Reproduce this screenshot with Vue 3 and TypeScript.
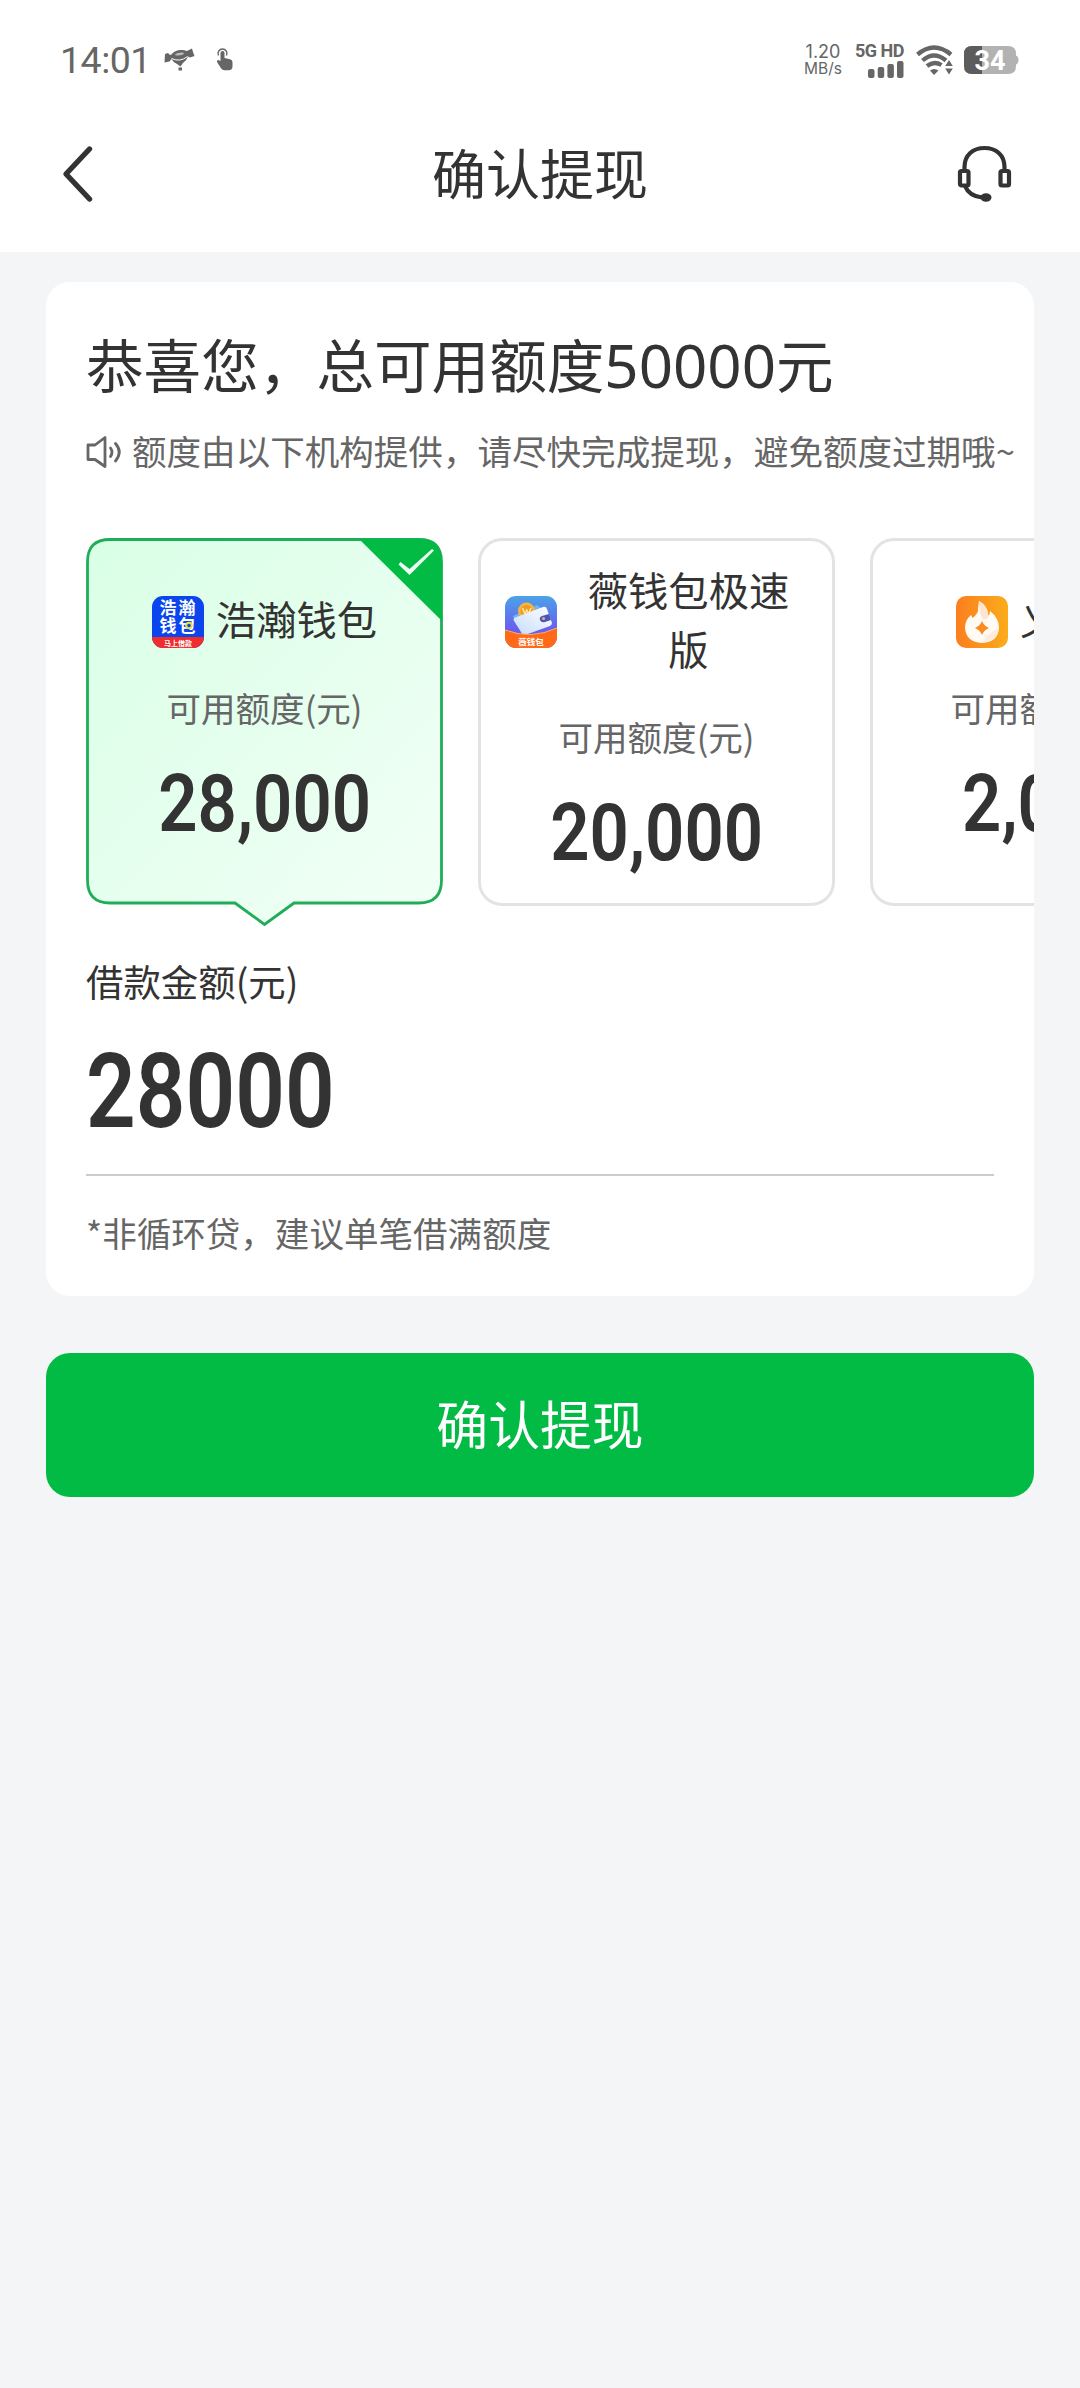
<script setup lang="ts">
interface Provider {
  id: string
  name: string
  amount: string
  selected: boolean
}

const providers: Provider[] = [
  { id: 'haohan', name: '浩瀚钱包', amount: '28,000', selected: true },
  { id: 'wei', name: '薇钱包极速版', amount: '20,000', selected: false },
  { id: 'fire', name: '义钱包', amount: '2,000', selected: false },
]
</script>

<template>
  <div class="page">
    <div class="status">
      <span class="clock">14:01</span>
      <svg class="candy" width="32" height="24" viewBox="0 0 32 24">
        <path d="M1 6L4 5L6 7L7.500 6.500Q10 2.500 16 2Q20 1.500 22.500 3L24 2.500L28 0.500L29 4L30.500 8L26 9.500L24 8.500Q23 12 19 15L16.500 18.500L13 16Q9 14 7.500 11L5.500 13.500L0.500 14.500Z" fill="#666" />
        <path d="M7.500 10.500Q16 14.500 23.500 8.500" stroke="#fff" stroke-width="1" fill="none" />
        <ellipse cx="15.500" cy="6" rx="4.500" ry="1.300" transform="rotate(-10 15.500 6)" fill="#bbb" />
        <path d="M14.500 19.500h3.500v3h-3.500z" fill="#666" />
      </svg>
      <svg class="touch" width="18" height="24" viewBox="0 0 18 24">
        <path d="M2.500 7.500a4.500 4.500 0 1 1 8 0" stroke="#666" stroke-width="1.400" fill="none" />
        <path d="M4.500 5a2 2 0 0 1 4 0v5l5.500 1.200q2.500 .5 2.500 3v4q0 4-4 4H8.500q-2 0-3.500-2L1 14q-.5-2 1.500-2L4.500 13z" fill="#666" />
      </svg>
      <div class="status-right">
        <div class="speed"><span class="rate">1.20</span><span class="unit">MB/s</span></div>
        <div class="signal">
          <span class="net">5G HD</span>
          <svg width="36" height="17" viewBox="0 0 36 17">
            <rect x="0" y="8" width="6.500" height="9" rx="2" fill="#666" />
            <rect x="9.700" y="6" width="6.500" height="11" rx="2" fill="#666" />
            <rect x="19.400" y="3" width="6.500" height="14" rx="2" fill="#666" />
            <rect x="29" y="0" width="6.500" height="17" rx="2" fill="#666" />
          </svg>
        </div>
        <svg class="wifi" width="38" height="30" viewBox="0 0 38 30">
          <g fill="none" stroke="#666" stroke-width="4.300">
            <path d="M1.500 9.500Q18 -4.500 35 9.500" />
            <path d="M6.500 15.500Q18 5.500 30 15.500" />
            <path d="M11 21Q18 15.500 25.500 20" />
          </g>
          <path d="M14 25.500q4-3 8.500 0L18 30z" fill="#666" />
          <path d="M33 15l3.800 6h-7.600zM33 29.500l3.800-6h-7.600z" fill="#666" />
        </svg>
        <svg class="battery" width="55" height="28" viewBox="0 0 55 28">
          <path d="M8 0H44q8 0 8 8v1.500q2.500 1 2.500 4.500T52 18.500V20q0 8-8 8H8q-8 0-8-8V8q0-8 8-8z" fill="#b2b2b2" />
          <path d="M8 0H18V28H8q-8 0-8-8V8q0-8 8-8z" fill="#5c5c5c" />
          <text x="26" y="23.500" text-anchor="middle" class="level">34</text>
        </svg>
      </div>
    </div>

    <header class="nav">
      <svg width="34" height="60" viewBox="0 0 34 60">
        <path d="M28.500 5L5 30L28.500 55" fill="none" stroke="#333" stroke-width="5.400" stroke-linecap="round" stroke-linejoin="round" />
      </svg>
      <h1>确认提现</h1>
      <svg width="56" height="58" viewBox="0 0 56 58">
        <g fill="none" stroke="#333" stroke-width="4.200">
          <path d="M7.500 25V22C7.500 10 16 3 27.500 3S47.500 10 47.500 22V25" />
          <rect x="3" y="26" width="8.500" height="14.500" rx="1.500" />
          <rect x="43.500" y="26" width="8.500" height="14.500" rx="1.500" />
          <path d="M8 41Q12 51 25 52.500" />
        </g>
        <ellipse cx="29" cy="52.500" rx="5.500" ry="4.200" fill="#333" />
      </svg>
    </header>

    <main>
      <section class="card">
        <h2>恭喜您，总可用额度<span class="digits">50000</span>元</h2>
        <p class="tip">
          <svg width="36" height="34" viewBox="0 0 36 34">
            <g fill="none" stroke="#666" stroke-width="2.800" stroke-linecap="round" stroke-linejoin="round">
              <path d="M2 10H9L19 2.500V31.500L9 24.500H2Z" />
              <path d="M24.500 13Q27.500 17 24.500 21.500" />
              <path d="M29.500 8.500Q37 17 29.500 26" />
            </g>
          </svg>
          <span class="tip-text">额度由以下机构提供，请尽快完成提现，避免额度过期哦~</span>
        </p>

        <div class="providers">
          <div v-for="p in providers" :key="p.id" class="provider" :class="{ selected: p.selected }">
            <svg v-if="p.selected" class="bubble" width="357" height="390" viewBox="0 0 357 390">
              <defs>
                <linearGradient id="mint" x1="0" y1="0" x2="1" y2="1">
                  <stop offset="0" stop-color="#d9ffe6" />
                  <stop offset="1" stop-color="#f2fff6" />
                </linearGradient>
              </defs>
              <path d="M24 1.500H333Q355.500 1.500 355.500 24V342Q355.500 365 333 365H208L178.500 386.500L149 365H24Q1.500 365 1.500 342V24Q1.500 1.500 24 1.500Z" fill="url(#mint)" stroke="#20ad59" stroke-width="2.800" />
              <path d="M273 1H333Q356 1 356 24V83Z" fill="#02bb44" />
              <path d="M312.500 26.500L314.500 24L323.500 31L346 11L348 12.500L323.500 37Z" fill="#edfff3" />
            </svg>
            <div class="who">
              <svg v-if="p.id === 'haohan'" class="logo" viewBox="0 0 52 52">
                <defs><clipPath id="haohan-tile"><rect width="52" height="52" rx="11" /></clipPath></defs>
                <g clip-path="url(#haohan-tile)">
                  <rect width="52" height="52" fill="#0b45ee" />
                  <rect y="41" width="52" height="11" fill="#f02c2c" />
                </g>
                <g class="logo-text">
                  <text x="26.500" y="18" font-size="17" letter-spacing="2">浩瀚</text>
                  <text x="26.500" y="36" font-size="17" letter-spacing="2">钱包</text>
                  <text x="26" y="49.500" font-size="7">马上借款</text>
                </g>
                <circle cx="37" cy="29.500" r="2.800" fill="#0b45ee" stroke="#e8e04a" stroke-width="2" />
              </svg>
              <svg v-else-if="p.id === 'wei'" class="logo" viewBox="0 0 52 52">
                <defs>
                  <clipPath id="wei-tile"><rect width="52" height="52" rx="11" /></clipPath>
                  <linearGradient id="wei-sky" x1="0" y1="0" x2="0" y2="1">
                    <stop offset="0" stop-color="#4aa3e6" />
                    <stop offset=".65" stop-color="#6b5cf0" />
                  </linearGradient>
                  <linearGradient id="wei-purse" x1="0" y1="1" x2="1" y2="0">
                    <stop offset="0" stop-color="#c4dcfb" />
                    <stop offset="1" stop-color="#fff" />
                  </linearGradient>
                </defs>
                <g clip-path="url(#wei-tile)">
                  <rect width="52" height="52" fill="url(#wei-sky)" />
                  <path d="M8 20L32 9L37 13L40 24L12 30Z" fill="#6db6f3" />
                  <circle cx="21.500" cy="15" r="8.500" fill="#f6b443" />
                  <circle cx="21.500" cy="15" r="6" fill="#f09a25" />
                  <path d="M17.500 12l2.500 6 1.800-4 2 4 2-6" fill="none" stroke="#ffe79a" stroke-width="1.600" />
                  <path d="M9 22L38 11q3-1 4 2l5 14q0 2-2 3L20 39q-3 0-4-3L8.500 24z" fill="url(#wei-purse)" />
                  <path d="M44 18l-7 2q-3 1-2 4t5 2l6-2z" fill="#4b56b8" />
                  <circle cx="38.500" cy="22.500" r="1.600" fill="#e8a678" />
                  <path d="M0 34Q26 44 52 32V52H0z" fill="#ff6a19" />
                  <path d="M0 34Q26 44 52 32" fill="none" stroke="#ffae5c" stroke-width="1" />
                </g>
                <g class="logo-text"><text x="26" y="48.500" font-size="8.500">薇钱包</text></g>
              </svg>
              <svg v-else class="logo" viewBox="0 0 52 52">
                <defs>
                  <linearGradient id="fire-bg" x1="0" y1="0" x2="1" y2="0">
                    <stop offset="0" stop-color="#fb7f1e" />
                    <stop offset="1" stop-color="#fbac1c" />
                  </linearGradient>
                </defs>
                <rect width="52" height="52" rx="10" fill="url(#fire-bg)" />
                <path d="M23 5Q32 10 32.500 20Q34 18 34 15Q43 22 43 32Q42 46 26 47Q10 46 9 32Q9 24 15 19Q16 20 16.500 22Q23 17 22 12Z" fill="#fffaf4" />
                <path d="M23 5Q32 10 32.500 20Q31 24 27 23Q23 18 23 5Z" fill="#ffe4d0" />
                <path d="M43 32Q41 45 27 46Q32 37 43 32Z" fill="#ffeadb" />
                <path d="M26 25Q28 30 33 32Q28 34 26 39Q24 34 19 32Q24 30 26 25Z" fill="#fb8b20" />
              </svg>
              <span class="name">{{ p.name }}</span>
            </div>
            <div class="label">可用额度(元)</div>
            <div class="amount"><span>{{ p.amount }}</span></div>
          </div>
        </div>

        <div class="loan-label">借款金额(元)</div>
        <div class="loan"><span>28000</span></div>
        <p class="note">*非循环贷，建议单笔借满额度</p>
      </section>
      <button class="submit" type="button">确认提现</button>
    </main>
  </div>
</template>

<style>
body {
  margin: 0;
  background: #f4f5f7;
}
</style>

<style scoped>
.page {
  width: 1080px;
  height: 2388px;
  overflow: hidden;
  background: #f4f5f7;
  color: #333;
  font-family: "Noto Sans CJK SC", sans-serif;
}
svg {
  display: block;
  flex: none;
}
h1, h2, p {
  margin: 0;
  font-weight: 400;
}
.status {
  box-sizing: border-box;
  height: 96px;
  padding: 24px 61px 0 60px;
  display: flex;
  align-items: center;
  background: #fff;
  color: #666;
}
.clock {
  width: 104px;
  font: 400 37.500px/40px Roboto, sans-serif;
  letter-spacing: -0.5px;
}
.touch {
  margin-left: 20px;
}
.status-right {
  margin-left: auto;
  display: flex;
  align-items: center;
}
.speed {
  width: 40px;
  margin-right: 13px;
  display: flex;
  flex-direction: column;
  align-items: center;
  font-family: Inter, sans-serif;
}
.rate {
  font-size: 18px;
  line-height: 18px;
}
.unit {
  font-size: 15.500px;
  line-height: 16px;
}
.signal {
  width: 48px;
  display: flex;
  flex-direction: column;
  align-items: flex-end;
  gap: 3px;
}
.net {
  font: 700 18px/15px Roboto, sans-serif;
  letter-spacing: -0.5px;
  white-space: nowrap;
}
.wifi {
  margin-left: 12px;
}
.battery {
  margin-left: 10px;
}
.level {
  font: 700 27px Roboto, sans-serif;
  fill: #fff;
}
.nav {
  box-sizing: border-box;
  height: 156px;
  padding: 0 67px 0 61px;
  display: flex;
  align-items: center;
  justify-content: space-between;
  background: #fff;
}
.nav h1 {
  font-size: 54px;
  line-height: 76px;
  padding-bottom: 4px;
  margin-left: 28px;
}
main {
  padding: 30px 46px 0;
}
.card {
  box-sizing: border-box;
  height: 1014px;
  padding: 41px 40px 0;
  border-radius: 24px;
  background: #fff;
  overflow: hidden;
}
.card h2 {
  font-size: 57.600px;
  line-height: 80px;
  white-space: nowrap;
}
.digits {
  font-family: "Noto Sans", sans-serif;
  font-size: 60px;
  line-height: 1;
}
.tip {
  margin-top: 25px;
  height: 48px;
  display: flex;
  align-items: center;
  gap: 10px;
  color: #666;
  font-size: 34.560px;
  line-height: 48px;
  white-space: nowrap;
}
.tip-text {
  padding-bottom: 4px;
}
.providers {
  margin-top: 62px;
  display: flex;
  gap: 35px;
}
.provider {
  position: relative;
  box-sizing: border-box;
  flex: none;
  width: 357px;
  height: 368px;
  padding: 0 24px;
  border: 3px solid #e3e3e3;
  border-radius: 24px;
  display: flex;
  flex-direction: column;
  align-items: center;
  justify-content: center;
}
.provider.selected {
  border-color: transparent;
}
.bubble {
  position: absolute;
  left: -3px;
  top: -3px;
}
.who {
  position: relative;
  display: flex;
  align-items: center;
  gap: 12px;
}
.logo {
  width: 52px;
  height: 52px;
}
.logo-text {
  fill: #fff;
  font-weight: 700;
  text-anchor: middle;
}
.name {
  font-size: 40.320px;
  line-height: 58.500px;
  text-align: center;
  margin: -3px 0 3px;
}
.label {
  position: relative;
  margin-top: 32px;
  color: #666;
  font-size: 34.560px;
  line-height: 48px;
}
.amount {
  position: relative;
  margin-top: 25px;
  font: 600 80px/96px Roboto, sans-serif;
  height: 96px;
}
.amount span {
  display: block;
  transform: scaleX(0.86);
}
.loan-label {
  margin-top: 48px;
  font-size: 37.440px;
  line-height: 54px;
}
.loan {
  height: 166px;
  border-bottom: 2px solid #ccc;
  font: 600 103px/167px Roboto, sans-serif;
}
.loan span {
  display: inline-block;
  transform: scaleX(0.845);
  transform-origin: left center;
}
.note {
  margin-top: 32px;
  color: #666;
  font-size: 34.560px;
  line-height: 48px;
}
.submit {
  display: block;
  box-sizing: border-box;
  width: 988px;
  height: 144px;
  margin-top: 57px;
  padding: 0 0 4px;
  border: 0;
  border-radius: 24px;
  background: #02bb44;
  color: #fff;
  font: 400 51.840px/140px "Noto Sans CJK SC", sans-serif;
}
</style>
